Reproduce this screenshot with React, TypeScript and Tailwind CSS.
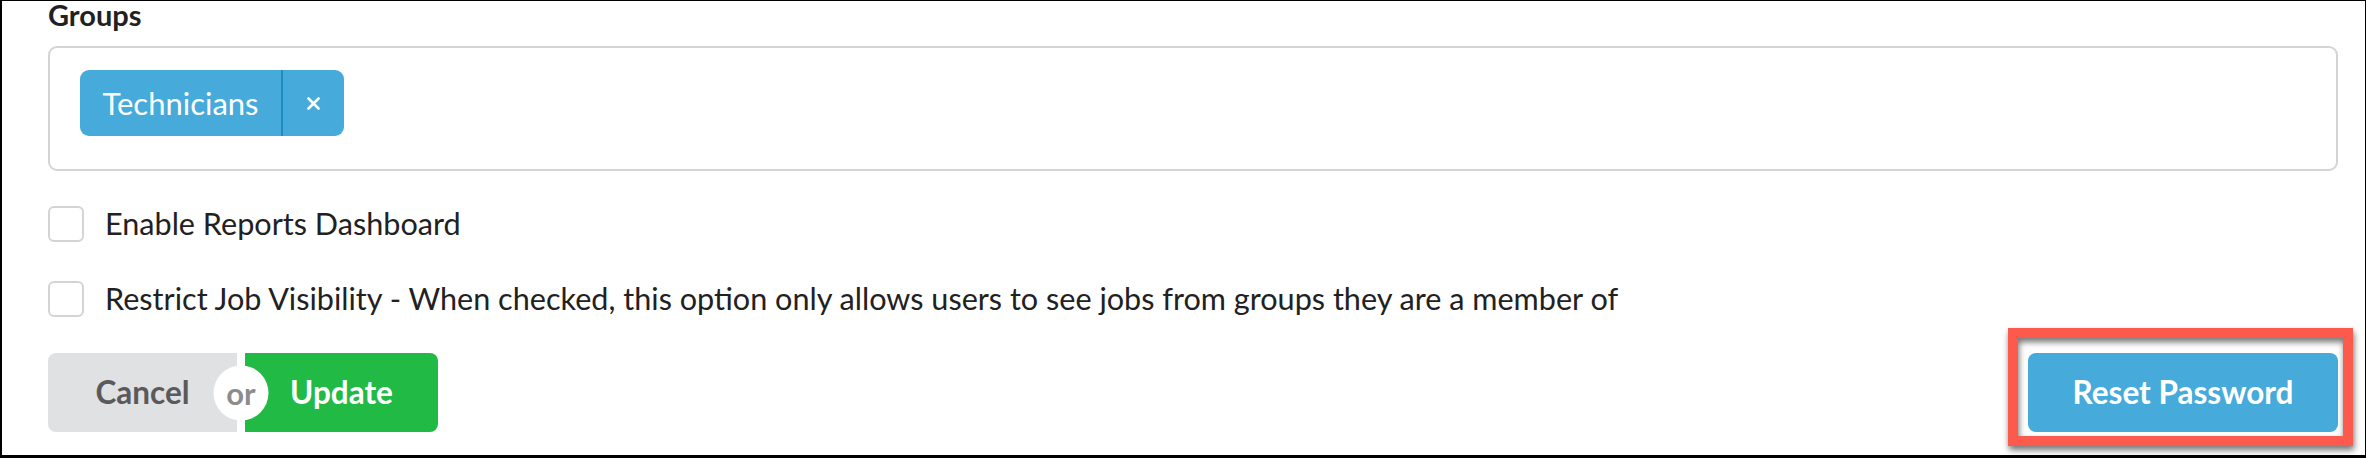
import { useState } from "react"

const Checkbox = ({ label }: { label: string }) => {
   const [checked, setChecked] = useState(false)
   return (
      <label className="flex items-center h-[36px] cursor-pointer">
         <span
            onClick={() => setChecked(!checked)}
            className="w-[36px] h-[36px] rounded-[6px] border-2 border-[#d4d4d5] bg-white shrink-0"
         />
         <span className="ml-[21px] text-[30.6px] leading-[36px] text-[#212121] whitespace-nowrap">{label}</span>
      </label>
   )
}

export default function App() {
   return (
      <div className="w-[2366px] h-[458px] bg-white border-l-2 border-t border-r border-b-[3px] border-black font-[Lato,sans-serif] relative">
         <div className="pl-[46px] pr-[27px]">
            {/* groups */}
            <div className="text-[29px] leading-[28px] font-bold text-[#212121]">Groups</div>
            <div className="mt-[17px] h-[125px] border-2 border-[#d4d4d5] rounded-[9px] pl-[30px] pt-[22px]">
               <div className="inline-flex h-[66px] rounded-[9px] bg-[#46aadb] text-white overflow-hidden">
                  <span className="flex items-center justify-center text-[31px] w-[201px]">Technicians</span>
                  <span className="w-[2px] bg-[#1e8bc3]" />
                  <span className="flex items-center justify-center w-[61px]">
                     <svg width="13" height="13" viewBox="0 0 13 13" stroke="white" strokeWidth="2.6" strokeLinecap="round">
                        <path d="M1.5 1.5 L11.5 11.5 M11.5 1.5 L1.5 11.5" />
                     </svg>
                  </span>
               </div>
            </div>

            <div className="mt-[35px]">
               <Checkbox label="Enable Reports Dashboard" />
            </div>
            <div className="mt-[39px]">
               <Checkbox label="Restrict Job Visibility - When checked, this option only allows users to see jobs from groups they are a member of" />
            </div>

            {/* actions */}
            <div className="mt-[36px] flex justify-between items-center">
               <div className="flex h-[79px]">
                  <button className="w-[189px] h-full rounded-l-[8px] bg-[#e0e1e2] text-[#5a5a5a] text-[31.5px] font-bold">Cancel</button>
                  <div className="relative w-[8px] h-full">
                     <span className="absolute left-1/2 top-1/2 -translate-x-1/2 -translate-y-1/2 w-[55px] h-[55px] rounded-full bg-white flex items-center justify-center text-[31px] font-bold text-[#8c8c8c] z-10">or</span>
                  </div>
                  <button className="w-[193px] h-full rounded-r-[8px] bg-[#21ba45] text-white text-[31.5px] font-bold">Update</button>
               </div>
               <button className="w-[310px] h-[79px] rounded-[8px] bg-[#46aadb] text-white text-[31.5px] font-bold">Reset Password</button>
            </div>
         </div>

         {/* highlight annotation */}
         <div className="absolute left-[2006px] top-[327px] w-[345px] h-[118px] border-[10px] border-[#fb5a4c] [filter:drop-shadow(1px_4px_3px_rgba(0,0,0,0.55))]" />
      </div>
   )
}
